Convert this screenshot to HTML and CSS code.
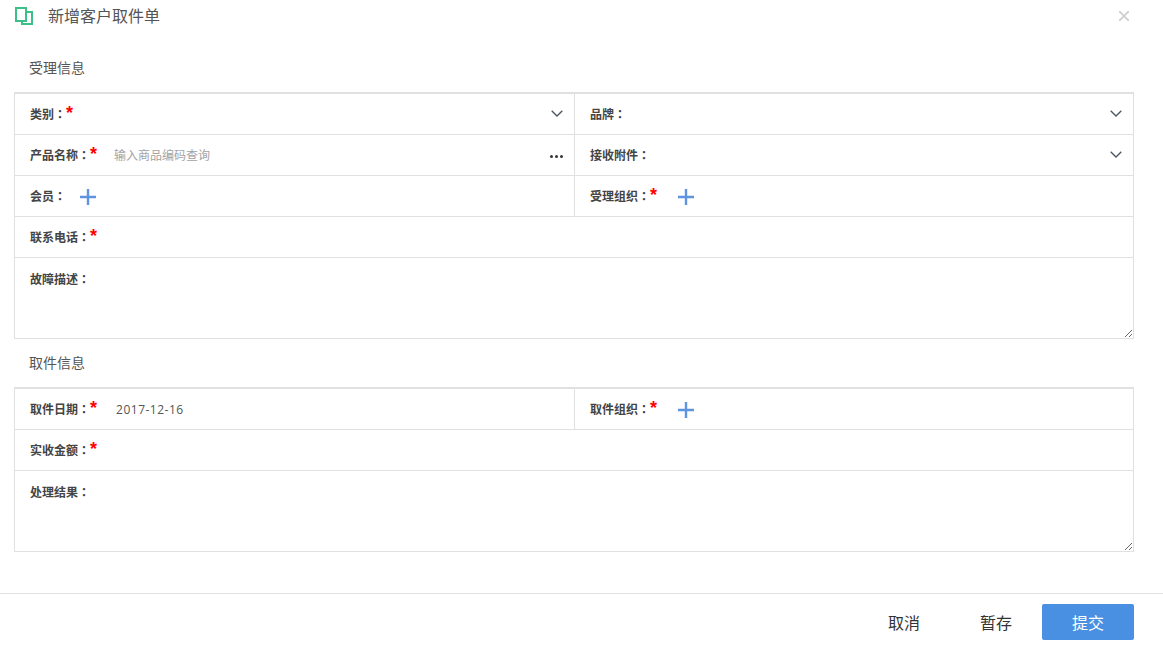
FILE: index.html
```html
<!DOCTYPE html>
<html lang="zh-CN">
<head>
<meta charset="utf-8">
<title>新增客户取件单</title>
<link rel="stylesheet" href="styles.css">
</head>
<body>
<div class="dialog">
  <header class="head">
    <svg class="logo" width="18" height="18" viewBox="0 0 18 18" fill="none" stroke="#3cc08a" stroke-width="2"><path d="M1 1h10v13H1z"/><path d="M12 5h5v12H7v-3"/></svg>
    <h1 class="title">新增客户取件单</h1>
    <svg class="close" width="10" height="10" viewBox="0 0 10 10" stroke="#cfcfcf" stroke-width="1.8"><path d="M0 0l10 10M10 0L0 10"/></svg>
  </header>

  <h2 class="section first">受理信息</h2>
  <div class="table">
    <div class="row">
      <div class="cell half"><span class="label">类别<span class="colon" lang="zh-TW">：</span></span><i class="star">*</i>
        <svg class="chev" width="12" height="7" viewBox="0 0 12 7" fill="none" stroke="#4a5560" stroke-width="1.3"><path d="M.7.7L6 6l5.3-5.3"/></svg></div>
      <div class="cell half"><span class="label">品牌<span class="colon" lang="zh-TW">：</span></span>
        <svg class="chev" width="12" height="7" viewBox="0 0 12 7" fill="none" stroke="#4a5560" stroke-width="1.3"><path d="M.7.7L6 6l5.3-5.3"/></svg></div>
    </div>
    <div class="row">
      <div class="cell half"><span class="label">产品名称<span class="colon" lang="zh-TW">：</span></span><i class="star">*</i><span class="placeholder">输入商品编码查询</span><span class="dots"><b></b><b></b><b></b></span></div>
      <div class="cell half"><span class="label">接收附件<span class="colon" lang="zh-TW">：</span></span>
        <svg class="chev" width="12" height="7" viewBox="0 0 12 7" fill="none" stroke="#4a5560" stroke-width="1.3"><path d="M.7.7L6 6l5.3-5.3"/></svg></div>
    </div>
    <div class="row">
      <div class="cell half"><span class="label">会员<span class="colon" lang="zh-TW">：</span></span>
        <svg class="plus plus-a" width="16" height="16" viewBox="0 0 16 16" stroke="#5f94e0" stroke-width="2.4"><path d="M8 0v16M0 8h16"/></svg></div>
      <div class="cell half"><span class="label">受理组织<span class="colon" lang="zh-TW">：</span></span><i class="star">*</i>
        <svg class="plus" width="16" height="16" viewBox="0 0 16 16" stroke="#5f94e0" stroke-width="2.4"><path d="M8 0v16M0 8h16"/></svg></div>
    </div>
    <div class="row"><div class="cell"><span class="label">联系电话<span class="colon" lang="zh-TW">：</span></span><i class="star">*</i></div></div>
    <div class="row tall"><div class="cell text"><span class="label">故障描述<span class="colon" lang="zh-TW">：</span></span><textarea class="area"></textarea></div></div>
  </div>

  <h2 class="section">取件信息</h2>
  <div class="table">
    <div class="row">
      <div class="cell half"><span class="label">取件日期<span class="colon" lang="zh-TW">：</span></span><i class="star">*</i><span class="value">2017-12-16</span></div>
      <div class="cell half"><span class="label">取件组织<span class="colon" lang="zh-TW">：</span></span><i class="star">*</i>
        <svg class="plus" width="16" height="16" viewBox="0 0 16 16" stroke="#5f94e0" stroke-width="2.4"><path d="M8 0v16M0 8h16"/></svg></div>
    </div>
    <div class="row"><div class="cell"><span class="label">实收金额<span class="colon" lang="zh-TW">：</span></span><i class="star">*</i></div></div>
    <div class="row tall"><div class="cell text"><span class="label">处理结果<span class="colon" lang="zh-TW">：</span></span><textarea class="area"></textarea></div></div>
  </div>

  <footer class="foot">
    <button class="btn">取消</button>
    <button class="btn">暂存</button>
    <button class="btn primary">提交</button>
  </footer>
</div>
</body>
</html>
```

FILE: styles.css
```css
* { box-sizing: border-box; }
html, body { margin: 0; padding: 0; background: #fff; }
body { font-family: "Noto Sans CJK SC", "Liberation Sans", sans-serif; color: #444; overflow: hidden; }
.dialog { width: 1163px; height: 647px; display: flex; flex-direction: column; }
.head { height: 32px; display: flex; align-items: center; padding: 0 34px 0 15px; }
.logo { flex: none; }
.title { margin: 0 0 0 15px; font-size: 16px; line-height: 32px; font-weight: 400; color: #555; flex: 1; position: relative; top: -1px; }
.close { flex: none; }
.section { margin: 0; padding-left: 29px; font-size: 14px; font-weight: 400; color: #555; height: 20px; line-height: 20px; }
.section.first { margin-top: 25px; margin-bottom: 15px; }
.table { margin-left: 14px; width: 1120px; border: 1px solid #e0e0e0; border-top: 2px solid #e0e0e0; display: flex; flex-direction: column; }
.table + .section { margin-top: 13px; margin-bottom: 15px; }
.row { display: flex; height: 41px; border-bottom: 1px solid #e0e0e0; }
.row:last-child { border-bottom: 0; height: 80px; }
.cell { flex: 1; min-width: 0; display: flex; align-items: center; padding-left: 15px; position: relative; }
.cell.half { flex: none; width: 559px; }
.cell.half:first-child { width: 560px; border-right: 1px solid #e0e0e0; }
.label { font-size: 12px; font-weight: 700; color: #444; line-height: 20px; }
.colon { font-family: "Noto Sans CJK TC", sans-serif; }
.star { font-style: normal; color: #f00; font-size: 18px; font-weight: 700; line-height: 16px; position: relative; top: -1px; font-family: "Liberation Sans", sans-serif; }
.placeholder { font-size: 12px; color: #a3a3a3; margin-left: 17px; position: relative; top: -1px; }
.value { font-size: 12px; color: #555; margin-left: 19px; font-family: "Open Sans", sans-serif; letter-spacing: .5px; }
.chev { position: absolute; right: 11px; top: 16px; }
.cell:last-child .chev { right: 12px; }
.dots { position: absolute; right: 11px; top: 20px; display: flex; gap: 2px; }
.dots b { width: 3px; height: 3px; border-radius: 50%; background: #333; display: block; }
.plus { margin-left: 21px; margin-top: 1px; }
.plus-a { margin-left: 14px; }
.text { align-items: flex-start; padding-top: 11px; padding-bottom: 0; }
.area { flex: 1; align-self: stretch; margin: -11px 0 0 0; border: 0; outline: 0; padding: 0; background: transparent; resize: vertical; min-height: 0; }
.foot { margin-top: 41px; border-top: 1px solid #e0e0e0; height: 54px; padding: 10px 29px 0 0; display: flex; justify-content: flex-end; gap: 0; }
.btn { width: 92px; height: 36px; border: 0; background: transparent; font: 400 16px/36px "Noto Sans CJK SC", sans-serif; color: #333; padding: 0; border-radius: 2px; }
.primary { background: #4a90e2; color: #fff; }
```
